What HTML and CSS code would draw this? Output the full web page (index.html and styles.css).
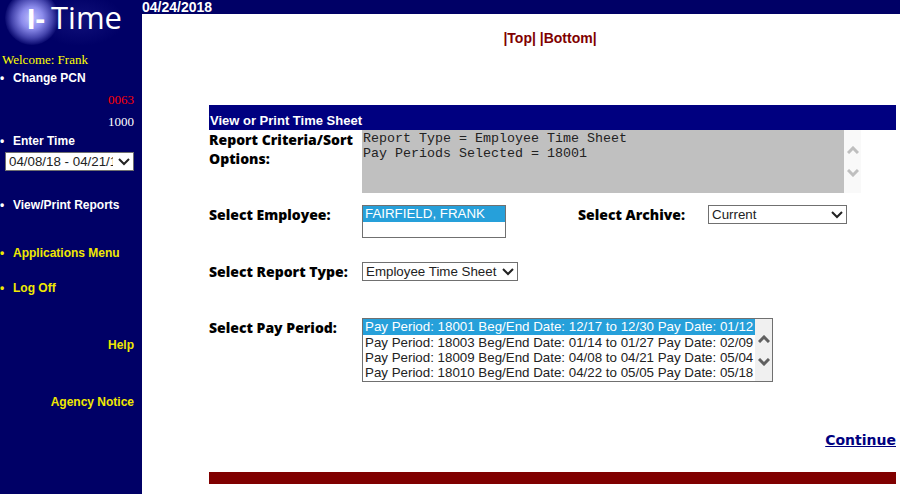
FILE: index.html
```html
<!DOCTYPE html>
<html lang="en">
<head>
    <meta charset="UTF-8">
    <meta name="viewport" content="width=device-width, initial-scale=1.0">
    <title>I-Time</title>
    <link rel="stylesheet" href="styles.css">
</head>
<body>
    <div class="page">
        <nav class="sidebar">
            <svg class="logo" viewBox="0 0 142 46" role="img" aria-label="I-Time">
                <defs>
                    <radialGradient id="glow" gradientUnits="userSpaceOnUse" cx="32" cy="18" r="27">
                        <stop offset="0" stop-color="#c0c0ff"/>
                        <stop offset="0.4" stop-color="#8c8cec"/>
                        <stop offset="0.75" stop-color="#4444ac"/>
                        <stop offset="1" stop-color="#08086e"/>
                    </radialGradient>
                    <radialGradient id="haze">
                        <stop offset="0" stop-color="#10107a"/>
                        <stop offset="1" stop-color="#000066"/>
                    </radialGradient>
                </defs>
                <ellipse cx="80" cy="20" rx="44" ry="26" fill="url(#haze)"/>
                <circle cx="32" cy="18" r="27" fill="url(#glow)"/>
                <text class="logo-bold" x="27" y="29">I-</text>
                <text class="logo-text" x="51" y="29">Time</text>
            </svg>
            <p class="welcome">Welcome: Frank</p>
            <a href="#" class="item">Change PCN</a>
            <span class="code red">0063</span>
            <span class="code">1000</span>
            <a href="#" class="item enter">Enter Time</a>
            <select class="drop period" aria-label="Enter Time">
                <option>04/08/18 - 04/21/18</option>
            </select>
            <a href="#" class="item reports">View/Print Reports</a>
            <a href="#" class="item yellow apps">Applications Menu</a>
            <a href="#" class="item yellow logoff">Log Off</a>
            <a href="#" class="side-link">Help</a>
            <a href="#" class="side-link">Agency Notice</a>
        </nav>

        <main class="main" id="top">
            <div class="datebar">04/24/2018</div>
            <div class="jump">
                <a href="#top">|Top|</a>
                <a href="#bottom">|Bottom|</a>
            </div>

            <form class="content">
                <h1 class="title">View or Print Time Sheet</h1>

                <div class="row criteria-row">
                    <label class="label" for="criteria">Report Criteria/Sort Options:</label>
                    <div class="scrollbox criteria-box">
                        <textarea class="criteria" id="criteria" readonly>Report Type = Employee Time Sheet
Pay Periods Selected = 18001</textarea>
                        <div class="scroller off">
                            <svg viewBox="0 0 12 8"><path d="M1 7 6 2l5 5"/></svg>
                            <svg viewBox="0 0 12 8"><path d="M1 1l5 5 5-5"/></svg>
                        </div>
                    </div>
                </div>

                <div class="row employee-row">
                    <label class="label" for="employee">Select Employee:</label>
                    <div class="pair">
                        <select class="list employee" id="employee" size="2">
                            <option selected>FAIRFIELD, FRANK</option>
                        </select>
                        <div class="archive-field">
                            <label class="label archive-label" for="archive">Select Archive:</label>
                            <select class="drop archive" id="archive">
                                <option>Current</option>
                            </select>
                        </div>
                    </div>
                </div>

                <div class="row type-row">
                    <label class="label" for="type">Select Report Type:</label>
                    <select class="drop type" id="type">
                        <option>Employee Time Sheet</option>
                    </select>
                </div>

                <div class="row">
                    <label class="label" for="payperiod">Select Pay Period:</label>
                    <div class="scrollbox bordered">
                        <select class="list plain" id="payperiod" size="4">
                            <option selected>Pay Period: 18001 Beg/End Date: 12/17 to 12/30 Pay Date: 01/12</option>
                            <option>Pay Period: 18003 Beg/End Date: 01/14 to 01/27 Pay Date: 02/09</option>
                            <option>Pay Period: 18009 Beg/End Date: 04/08 to 04/21 Pay Date: 05/04</option>
                            <option>Pay Period: 18010 Beg/End Date: 04/22 to 05/05 Pay Date: 05/18</option>
                        </select>
                        <div class="scroller">
                            <svg viewBox="0 0 12 8"><path d="M1 7 6 2l5 5"/></svg>
                            <svg viewBox="0 0 12 8"><path d="M1 1l5 5 5-5"/></svg>
                        </div>
                    </div>
                </div>

                <a href="#" class="continue">Continue</a>
                <div class="bottombar" id="bottom"></div>
            </form>
        </main>
    </div>
</body>
</html>
```
FILE: styles.css
```css
*{
    box-sizing: border-box;
}
body{
    margin: 0;
    background-color: #fff;
    font-family: Arial, "Liberation Sans", sans-serif;
}
a{
    text-decoration: none;
}
.page{
    display: grid;
    grid-template-columns: 142px 1fr;
    min-height: 100vh;
}

/* sidebar */
.sidebar{
    display: flex;
    flex-direction: column;
    background-color: #000066;
    color: #fff;
    padding-right: 8px;
    font-size: 12px;
    line-height: 16px;
}
.logo{
    width: 142px;
    height: 46px;
    margin-bottom: 6px;
    fill: #fff;
}
.logo-bold{
    font: bold 30px Arial, "Liberation Sans", sans-serif;
}
.logo-text{
    font: 31px "Open Sans", sans-serif;
}
.welcome{
    margin: 0 0 2px 2px;
    color: #ffff00;
    font-family: "Times New Roman", "Liberation Serif", serif;
    font-size: 13px;
}
.item{
    display: flex;
    color: #fff;
    font-weight: bold;
}
.item::before{
    content: "•";
    width: 13px;
}
.code{
    margin-top: 6px;
    text-align: right;
    font-family: "Times New Roman", "Liberation Serif", serif;
    font-size: 13px;
}
.red{
    color: #ff0000;
}
.enter{
    margin-top: 3px;
}
.period{
    margin: 3px 0 0 5px;
}
.reports{
    margin-top: 26px;
}
.apps{
    margin-top: 32px;
}
.logoff{
    margin-top: 19px;
}
.yellow,
.side-link{
    color: #f0e800;
}
.side-link{
    margin-top: 41px;
    text-align: right;
    font-weight: bold;
}

/* form controls */
.drop{
    appearance: none;
    height: 19px;
    padding: 0 20px 0 3px;
    border: 1px solid #707070;
    border-radius: 0;
    background: #fff url("data:image/svg+xml,%3Csvg xmlns='http://www.w3.org/2000/svg' width='12' height='8'%3E%3Cpath d='M1 1l5 5 5-5' fill='none' stroke='%23222' stroke-width='2'/%3E%3C/svg%3E") no-repeat right 3px center;
    color: #222;
    font-family: inherit;
}
.list{
    padding: 0;
    border: 1px solid #707070;
    border-radius: 0;
    overflow: hidden;
    background-color: #fff;
    color: #222;
    font-family: inherit;
}
.list option{
    min-height: 15px;
    padding: 0 2px;
    line-height: 15px;
}
.list option:checked{
    padding-bottom: 1px;
    background: linear-gradient(#26a0da, #26a0da);
    -webkit-text-fill-color: #fff;
}
.plain{
    border: none;
    height: 62px;
}
.scrollbox{
    display: flex;
}
.bordered{
    border: 1px solid #707070;
}
.scroller{
    display: flex;
    flex-direction: column;
    align-items: center;
    justify-content: center;
    gap: 15px;
    width: 17px;
    background-color: #f0f0f0;
}
.scroller svg{
    width: 12px;
    height: 8px;
    fill: none;
    stroke: #606060;
    stroke-width: 3;
}
.off{
    background-color: #f9f9f9;
}
.off svg{
    stroke: #bfbfbf;
}

/* main area */
.datebar{
    height: 14px;
    background-color: #000066;
    color: #fff;
    font-size: 14px;
    font-weight: bold;
    line-height: 14px;
}
.jump{
    padding: 16px 0 59px 58px;
    text-align: center;
    font-size: 14px;
    font-weight: bold;
    line-height: 16px;
}
.jump a{
    color: #800000;
}
.content{
    display: flex;
    flex-direction: column;
    padding: 0 4px 10px 67px;
}
.title{
    margin: 0;
    padding: 6px 1px 0;
    background-color: #000080;
    color: #fff;
    font-size: 13px;
    line-height: 19px;
}
.row{
    display: grid;
    grid-template-columns: 153px 1fr;
    align-items: start;
    justify-items: start;
}
.label{
    font-family: "Arial Black", "Open Sans", sans-serif;
    font-size: 14px;
    font-weight: 900;
    line-height: 19px;
}
.criteria-row{
    margin-bottom: 12px;
}
.criteria-box{
    width: 100%;
    padding-right: 35px;
}
.criteria{
    flex: 1;
    height: 63px;
    padding: 1px;
    border: none;
    resize: none;
    background-color: #c0c0c0;
    color: #222;
    font-family: "Courier New", "Liberation Mono", monospace;
    line-height: 15px;
}
.employee-row{
    margin-bottom: 24px;
}
.pair{
    display: flex;
    align-items: flex-start;
    justify-content: space-between;
    width: 100%;
    padding-right: 49px;
}
.employee{
    width: 144px;
    height: 33px;
}
.archive-field{
    display: flex;
}
.archive-label{
    width: 130px;
}
.archive{
    width: 139px;
}
.type-row{
    margin-bottom: 37px;
}
.continue{
    align-self: flex-end;
    margin: 48px 0 22px;
    color: #000080;
    font-family: Verdana, "DejaVu Sans", sans-serif;
    font-size: 14px;
    font-weight: bold;
    line-height: 20px;
    text-decoration: underline;
}
.bottombar{
    height: 12px;
    background-color: #800000;
}
```
